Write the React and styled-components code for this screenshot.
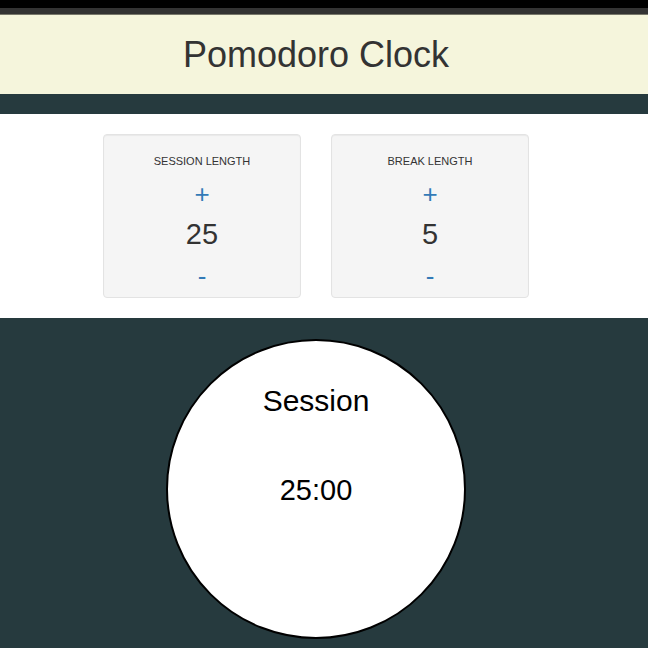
import React from 'react'
import styled, {createGlobalStyle} from 'styled-components'

const GlobalStyle = createGlobalStyle`
  html, body {
    margin: 0;
    padding: 0;
    background: #263a3e;
    font-family: 'Liberation Sans', Arial, sans-serif;
    color: #333;
  }
`

const TopBar = styled.div`
  height: 8px;
  background: #000;
  border-bottom: 6px solid #333;
`

const Header = styled.header`
  height: 79px;
  background: #f5f5dc;
  border-top: 1px solid #77776a;
  display: flex;
  align-items: center;
  justify-content: center;
  padding-right: 16px;
`

const Title = styled.h1`
  margin: 0;
  font-size: 36px;
  font-weight: normal;
  color: #333;
`

const Spacer = styled.div`
  height: 20px;
`

const Controls = styled.section`
  background: #fff;
  display: flex;
  justify-content: center;
  gap: 30px;
  padding: 20px 16px 20px 0;
`

const Panel = styled.div`
  width: 198px;
  height: 164px;
  box-sizing: border-box;
  background: #f5f5f5;
  border: 1px solid #e3e3e3;
  border-radius: 4px;
  box-shadow: inset 0 1px 1px rgba(0, 0, 0, 0.05);
  display: flex;
  flex-direction: column;
  align-items: center;
  padding-top: 19px;
`

const PanelLabel = styled.div`
  font-size: 11px;
  text-transform: uppercase;
  color: #333;
  height: 14px;
  line-height: 14px;
`

const StepButton = styled.button`
  border: 0;
  background: none;
  padding: 0;
  font-family: inherit;
  color: #337ab7;
  font-size: 26px;
  line-height: 30px;
  cursor: pointer;
  margin-top: ${p => p.$top}px;
`

const Value = styled.div`
  font-size: 29px;
  line-height: 34px;
  margin-top: 8px;
  color: #333;
`

const Stage = styled.main`
  display: flex;
  justify-content: center;
  padding: 21px 16px 10px 0;
`

const Clock = styled.div`
  width: 300px;
  height: 300px;
  box-sizing: border-box;
  border-radius: 50%;
  border: 2px solid #000;
  background: #fff;
  display: flex;
  flex-direction: column;
  align-items: center;
  color: #000;
`

const ClockLabel = styled.div`
  font-size: 30px;
  margin-top: 42px;
  line-height: 36px;
`

const ClockTime = styled.div`
  font-size: 29px;
  margin-top: 54px;
  line-height: 34px;
`

function LengthControl({label, value}) {
  return (
    <Panel>
      <PanelLabel>{label}</PanelLabel>
      <StepButton $top={11}>+</StepButton>
      <Value>{value}</Value>
      <StepButton $top={10}>-</StepButton>
    </Panel>
  )
}

export default function App() {
  return (
    <>
      <GlobalStyle />
      <TopBar />
      <Header>
        <Title>Pomodoro Clock</Title>
      </Header>
      <Spacer />
      <Controls>
        <LengthControl label='Session Length' value={25} />
        <LengthControl label='Break Length' value={5} />
      </Controls>
      <Stage>
        <Clock>
          <ClockLabel>Session</ClockLabel>
          <ClockTime>25:00</ClockTime>
        </Clock>
      </Stage>
    </>
  )
}
